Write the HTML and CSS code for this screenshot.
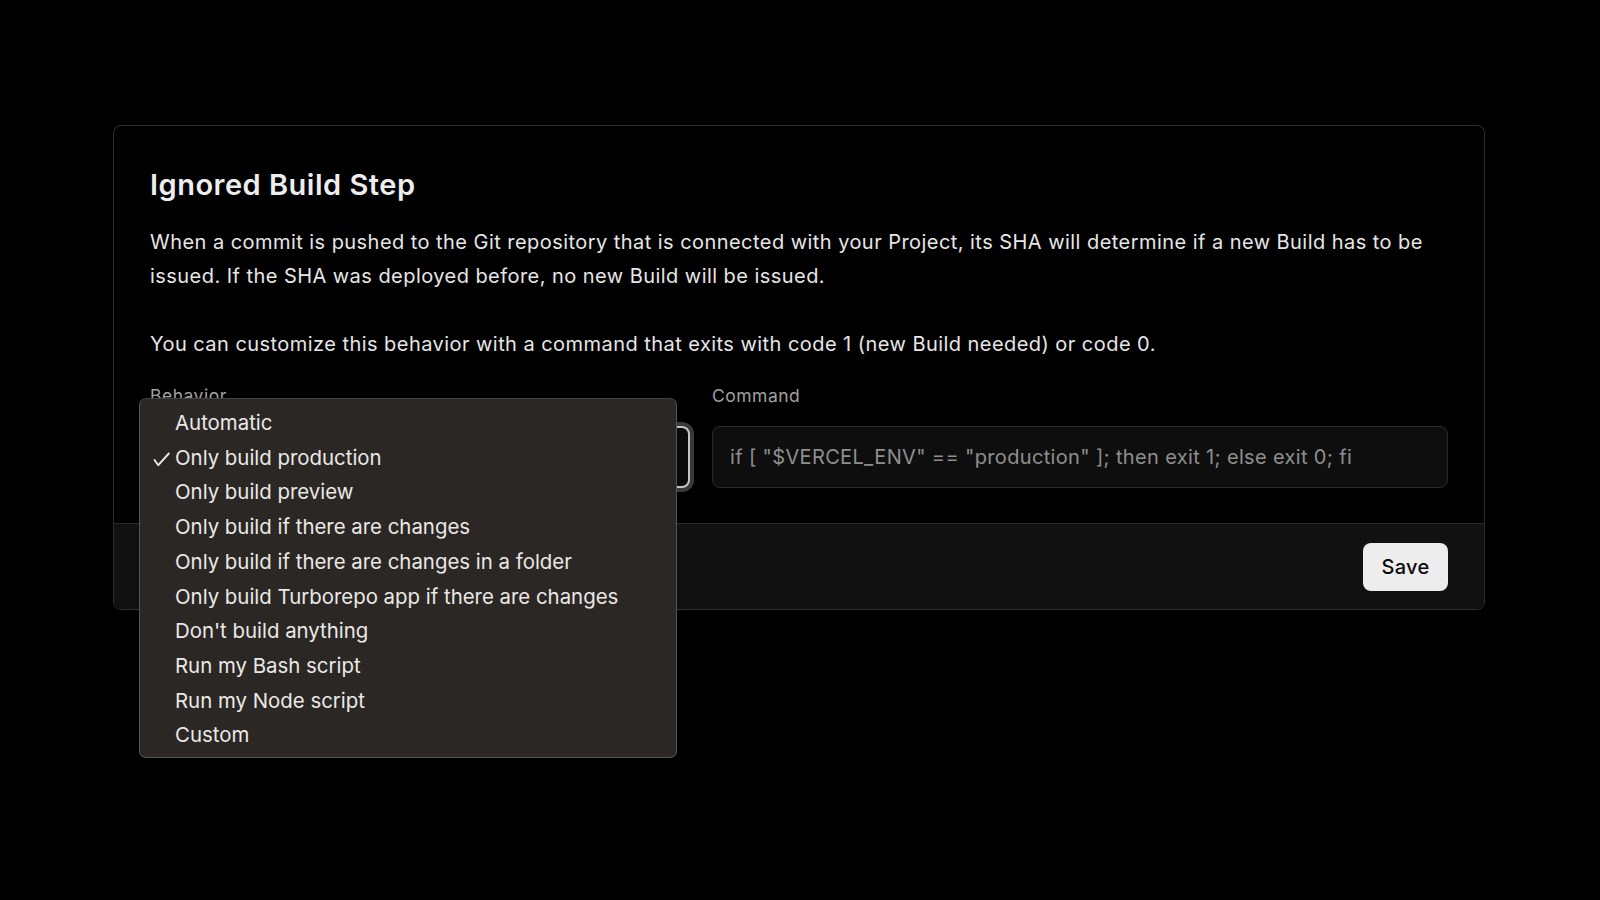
FILE: index.html
```html
<!DOCTYPE html>
<html lang="en">
<head>
	<meta charset="UTF-8">
	<title>Ignored Build Step</title>
	<link rel="stylesheet" href="styles.css">
</head>
<body>
	<main class="page">
		<section class="card">
			<div class="card-body">
				<h2 class="card-title">Ignored Build Step</h2>
				<p class="card-text">When a commit is pushed to the Git repository that is connected with your Project, its SHA will determine if a new Build has to be issued. If the SHA was deployed before, no new Build will be issued.</p>
				<p class="card-text card-text-gap">You can customize this behavior with a command that exits with code 1 (new Build needed) or code 0.</p>

				<div class="fields">
					<div class="field field-behavior">
						<label class="field-label">Behavior</label>
						<div class="select is-focused"></div>

						<ul class="menu">
							<li>Automatic</li>
							<li class="is-checked">
								<svg class="check" width="17" height="15" viewBox="0 0 17 15"><path d="M1.5 8 L5.3 13.2 L15.8 1.5" fill="none" stroke="currentColor" stroke-width="1.9" stroke-linecap="round" stroke-linejoin="round"/></svg>
								Only build production
							</li>
							<li>Only build preview</li>
							<li>Only build if there are changes</li>
							<li>Only build if there are changes in a folder</li>
							<li>Only build Turborepo app if there are changes</li>
							<li>Don't build anything</li>
							<li>Run my Bash script</li>
							<li>Run my Node script</li>
							<li>Custom</li>
						</ul>
					</div>
					<div class="field">
						<label class="field-label">Command</label>
						<div class="input">if [ "$VERCEL_ENV" == "production" ]; then exit 1; else exit 0; fi</div>
					</div>
				</div>
			</div>
			<div class="card-footer">
				<button class="btn">Save</button>
			</div>
		</section>
	</main>
</body>
</html>
```

FILE: styles.css
```css
*{
	margin: 0;
	padding: 0;
	box-sizing: border-box;
}
html,body{
	height: 100%;
}
body{
	background-color: #000;
	color: #ededed;
	font-family: Inter, "Noto Sans", sans-serif;
	overflow: hidden;
}
ul{list-style: none;}

.page{
	padding: 125px 0 0 113px;
}
.card{
	width: 1372px;
	border: 1px solid #2e2e2e;
	border-radius: 8px;
	background-color: #000;
}
.card-body{
	padding: 41px 36px 35px;
}
.card-title{
	font-size: 29px;
	line-height: 36px;
	font-weight: 600;
	letter-spacing: 0.5px;
	color: #ededed;
}
.card-text{
	margin-top: 22px;
	font-size: 20px;
	line-height: 34px;
	letter-spacing: 0.45px;
	color: #e6e6e6;
}
.card-text-gap{
	margin-top: 34px;
}

.fields{
	display: grid;
	grid-template-columns: 540px 1fr;
	column-gap: 22px;
	margin-top: 25px;
}
.field{
	display: flex;
	flex-direction: column;
	gap: 20px;
}
.field-behavior{
	position: relative;
}
.field-label{
	font-size: 17.5px;
	line-height: 20px;
	letter-spacing: 0.5px;
	color: #a1a1a1;
}
.select,
.input{
	height: 62px;
	border-radius: 8px;
	display: flex;
	align-items: center;
	padding: 0 17px;
	font-size: 20px;
	letter-spacing: 0.35px;
}
.select{
	border: 2px solid #c4c4c4;
	background-color: #0a0a0a;
}
.select.is-focused{
	box-shadow: 0 0 0 4px #3a3a3a;
}
.input{
	border: 1px solid #2a2a2a;
	background-color: #0e0e0e;
	color: #8f8f8f;
	white-space: nowrap;
}

/* native dropdown, open over the behavior select */
.menu{
	position: absolute;
	left: -11px;
	top: 12px;
	width: 538px;
	padding: 7px 0 4px;
	background-color: #2a2724;
	border: 1px solid #57534f;
	border-top-color: #45413d;
	border-radius: 7px;
	color: #ebe9e6;
	font-size: 20.4px;
	z-index: 5;
}
.menu li{
	position: relative;
	line-height: 34.7px;
	padding-left: 35px;
}
.menu .check{
	position: absolute;
	left: 13px;
	top: 11px;
}

.card-footer{
	height: 86px;
	border-top: 1px solid #2e2b29;
	background-color: #111;
	border-radius: 0 0 8px 8px;
	display: flex;
	align-items: center;
	justify-content: flex-end;
	padding: 0 36px;
}
.btn{
	width: 85px;
	height: 48px;
	border: 0;
	border-radius: 8px;
	background-color: #ededed;
	color: #0a0a0a;
	font-family: Inter, "Noto Sans", sans-serif;
	font-size: 20px;
	font-weight: 500;
	letter-spacing: 0.3px;
}
```
